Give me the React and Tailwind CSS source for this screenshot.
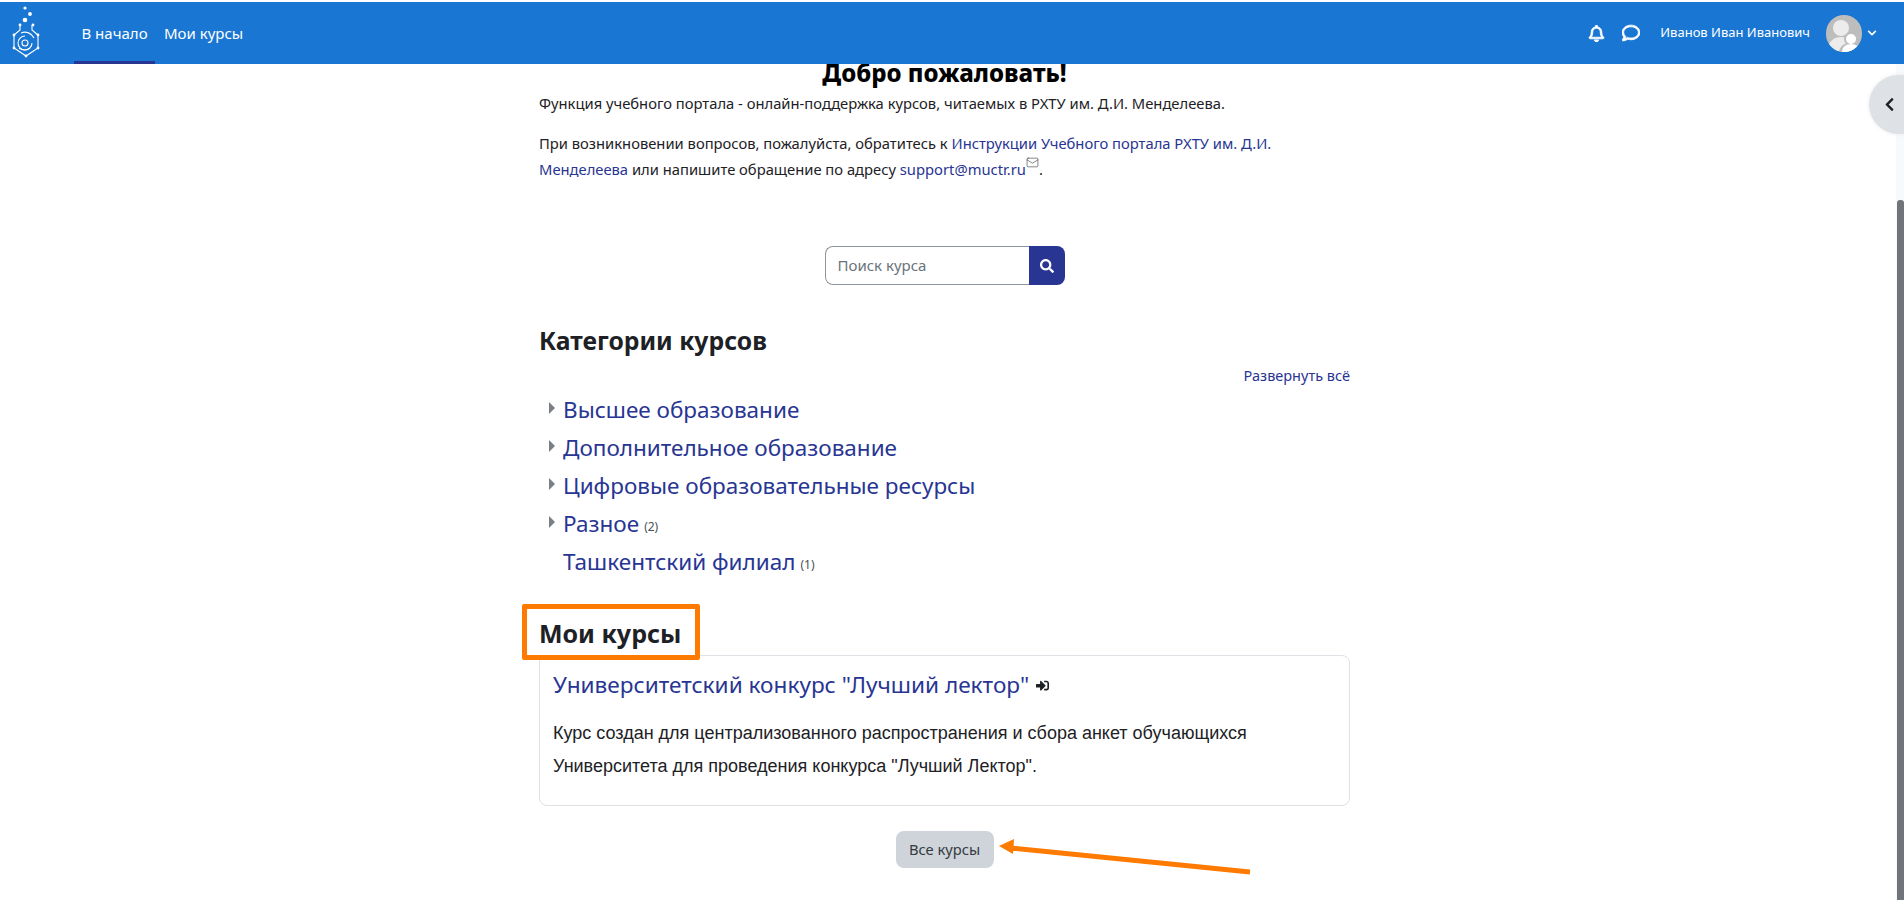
import React from 'react';
import { Mail } from 'lucide-react';
import { FaRegBell, FaRegComment, FaChevronDown, FaChevronLeft, FaSearch, FaSignInAlt } from 'react-icons/fa';

const categories = [
    { name: 'Высшее образование', arrow: true },
    { name: 'Дополнительное образование', arrow: true },
    { name: 'Цифровые образовательные ресурсы', arrow: true },
    { name: 'Разное', arrow: true, count: 2 },
    { name: 'Ташкентский филиал', arrow: false, count: 1 },
];

const logoNodes = [[20, 25], [33, 25], [14, 35], [38, 35], [14, 48], [38, 48], [26, 56]];

const Logo = () => (
    <svg width="52" height="62" viewBox="0 2 52 62" fill="none" stroke="#fff" strokeWidth="1.1" className="shrink-0">
        <circle cx="25" cy="8" r="1.6" fill="#fff" stroke="none" />
        <circle cx="30" cy="14" r="1.9" fill="#fff" stroke="none" />
        <circle cx="25" cy="20" r="2.3" fill="#fff" stroke="none" />
        <path d="M20 25v5l-6 5v13l12 8 12-8V35l-6-5v-5" />
        {logoNodes.map(([x, y]) => (
            <circle key={`${x}-${y}`} cx={x} cy={y} r="1.4" fill="#fff" stroke="none" />
        ))}
        <circle cx="25" cy="43" r="3" />
        <path d="M25 36a7 7 0 1 0 7 7" />
        <path d="M21 33a10 10 0 0 1 13 5" />
        <path d="M30 48a9 9 0 0 1-11 0" />
    </svg>
);

const Avatar = () => (
    <svg width="36" height="37" viewBox="0 0 36 37" className="rounded-full bg-[#bdbdbd]">
        <circle cx="15" cy="13" r="8" fill="#ececec" />
        <path d="M2 36c0-9 5-14 13-14s12 5 13 14z" fill="#ececec" />
        <circle cx="25" cy="24" r="7" fill="#bdbdbd" />
        <path d="M13 37c1-6 5-9 12-9s11 3 12 9z" fill="#bdbdbd" />
        <circle cx="25" cy="24" r="5" fill="#fff" />
        <path d="M16 37c0-5 4-8 9-8s9 3 9 8z" fill="#fff" />
    </svg>
);

const App = () => {
    return (
        <div className="relative flex flex-col h-[900px] overflow-hidden bg-white font-['Noto_Sans',sans-serif] text-[#1d2125]">
            <header className="flex items-center h-[64px] shrink-0 border-t-2 border-white bg-[#1976d2] text-white text-[15px]">
                <div className="mr-[22px] h-full overflow-hidden"><Logo /></div>
                <nav className="flex h-full">
                    <a className="flex items-center w-[81px] justify-center border-b-[3px] border-[#283593] pt-[3px]">В начало</a>
                    <a className="flex items-center ml-[9px]">Мои курсы</a>
                </nav>
                <div className="ml-auto flex items-center pr-[27px]">
                    <FaRegBell size={17} stroke="currentColor" strokeWidth={24} />
                    <FaRegComment size={18} stroke="currentColor" strokeWidth={24} className="ml-[17px]" />
                    <span className="ml-[20px] text-[13px]">Иванов Иван Иванович</span>
                    <span className="ml-[16px] flex"><Avatar /></span>
                    <FaChevronDown size={10} className="ml-[5px]" />
                </div>
            </header>

            <div className="flex flex-1 min-h-0">
                <main className="flex-1 overflow-hidden">
                    <div className="w-[811px] ml-[539px]">
                        <h1 className="-mt-[6px] text-center text-[24px] leading-[29px] font-extrabold text-black">Добро пожаловать!</h1>
                        <p className="mt-[4px] text-[14.75px] leading-[25px]">
                            Функция учебного портала - онлайн-поддержка курсов, читаемых в РХТУ им. Д.И. Менделеева.
                        </p>
                        <p className="mt-[15px] text-[14.75px] leading-[25px]">
                            При возникновении вопросов, пожалуйста, обратитесь к <a className="text-[#283593]">Инструкции Учебного портала РХТУ им. Д.И. Менделеева</a> или напишите обращение по адресу <a className="text-[#283593]">support@muctr.ru</a>
                            <Mail size={13} strokeWidth={1} className="inline-block align-[6px]" />.
                        </p>

                        <div className="mt-[64px] flex justify-center">
                            <div className="flex w-[240px] h-[39px]">
                                <input
                                    placeholder="Поиск курса"
                                    className="w-[204px] px-[12px] border border-[#8f959e] border-r-0 rounded-l-[8px] text-[15px] placeholder:text-[#6a737b] outline-none"
                                />
                                <button className="flex flex-1 items-center justify-center bg-[#283593] rounded-r-[8px] text-white">
                                    <FaSearch size={14} />
                                </button>
                            </div>
                        </div>

                        <h2 className="mt-[39px] text-[24.7px] leading-[34px] font-bold">Категории курсов</h2>
                        <div className="mt-[7px] text-right text-[14.5px] leading-[20px] text-[#283593]">Развернуть всё</div>

                        <ul className="mt-[6px]">
                            {categories.map((cat) => (
                                <li key={cat.name} className="flex items-center h-[38px]">
                                    <span className="flex w-[24px] pl-[10px]">
                                        {cat.arrow && <span className="mb-[4px] h-0 w-0 border-y-[6px] border-l-[6px] border-y-transparent border-l-[#7a7f85]" />}
                                    </span>
                                    <a className="text-[22.5px] leading-[30px] text-[#283593]">{cat.name}</a>
                                    {cat.count && <span className="ml-[5px] mt-[5px] text-[12px] text-[#495057]">({cat.count})</span>}
                                </li>
                            ))}
                        </ul>

                        <h2 className="mt-[35px] text-[25px] leading-[34px] font-bold">Мои курсы</h2>
                        <div className="mt-[5px] h-[151px] border border-[#dee2e6] rounded-[8px] px-[13px] pt-[13px]">
                            <div className="flex items-center">
                                <a className="text-[22.6px] leading-[32px] text-[#283593]">Университетский конкурс "Лучший лектор"</a>
                                <FaSignInAlt size={13} className="ml-[7px]" />
                            </div>
                            <p className="mt-[16px] font-['Liberation_Sans',sans-serif] text-[18px] leading-[33px]">
                                Курс создан для централизованного распространения и сбора анкет обучающихся Университета для проведения конкурса "Лучший Лектор".
                            </p>
                        </div>
                        <div className="mt-[25px] flex justify-center">
                            <button className="w-[98px] h-[37px] rounded-[8px] bg-[#ced4da] text-[14.7px] text-[#343a40]">Все курсы</button>
                        </div>
                    </div>
                </main>
                <div className="w-[8px] shrink-0 bg-[#f8f9fa] flex flex-col pl-px pt-[136px]">
                    <div className="flex-1 bg-[#71757a] rounded-t-[3px]" />
                </div>
            </div>

            <div className="absolute right-0 top-[75px] flex items-center w-[35px] h-[59px] pl-[13px] bg-[#dee2e6] rounded-l-full shadow-[0_0_4px_rgba(0,0,0,0.08)]">
                <FaChevronLeft size={15} />
            </div>

            <div className="absolute left-[522px] top-[604px] w-[178px] h-[56px] border-[5px] border-[#ff7a00] rounded-[2px]" />
            <svg className="absolute left-[990px] top-[830px]" width="270" height="50" viewBox="0 0 270 50">
                <path d="M260 42L20 18" stroke="#ff7a00" strokeWidth="5" />
                <path d="M9 16L24 9l-1 15z" fill="#ff7a00" />
            </svg>
        </div>
    );
};

export default App;
